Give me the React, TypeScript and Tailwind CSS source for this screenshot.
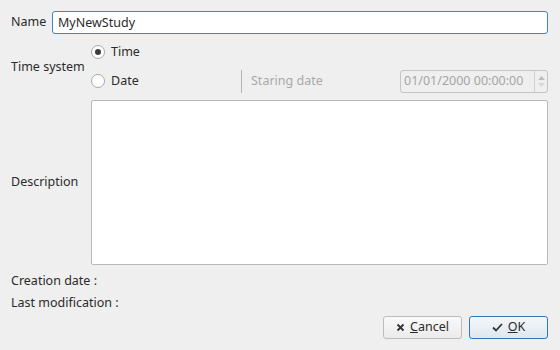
import React, { useState } from "react";

const font = { fontFamily: '"Noto Sans", "Open Sans", sans-serif' };

function Radio({ checked, label, onClick }: { checked: boolean; label: string; onClick: () => void }) {
  return (
    <button className="flex items-center gap-[6px] h-[22px]" onClick={onClick}>
      <span className="w-[14px] h-[14px] rounded-full border border-[#a8a8a8] bg-white flex items-center justify-center">
        {checked && <span className="w-[6px] h-[6px] rounded-full bg-[#3c3c3c]" />}
      </span>
      <span>{label}</span>
    </button>
  );
}

export default function App() {
  const [name, setName] = useState("MyNewStudy");
  const [system, setSystem] = useState<"time" | "date">("time");

  return (
    <div style={font} className="w-[560px] h-[350px] bg-[#efefef] text-[12.5px] text-[#2b2b2b] flex flex-col pl-[11px] pr-[12px] pt-[11px]">
      <div className="flex items-center h-[23px]">
        <span className="w-[41px]">Name</span>
        <input
          autoFocus
          value={name}
          onChange={(e) => setName(e.target.value)}
          className="flex-1 h-[23px] px-[5px] bg-white border border-[#3b86c7] rounded-[3px] outline-none caret-black"
        />
      </div>

      <div className="flex mt-[7px]">
        <div className="w-[80px] flex items-center pt-[2px]">Time system</div>
        <div className="flex-1 flex flex-col gap-[7px]">
          <Radio checked={system === "time"} label="Time" onClick={() => setSystem("time")} />
          <div className="flex items-center h-[22px]">
            <div className="w-[150px]">
              <Radio checked={system === "date"} label="Date" onClick={() => setSystem("date")} />
            </div>
            <div className="w-px h-[23px] bg-[#b4b4b4]" />
            <span className="ml-[9px] text-[#a9a9a9] flex-1">Staring date</span>
            <div className="w-[148px] h-[23px] flex border border-[#c4c4c4] rounded-[3px] bg-[#efefef]">
              <span className="flex-1 flex items-center pl-[3px] text-[#a5a5a5]">01/01/2000 00:00:00</span>
              <div className="w-[13px] border-l border-[#d0d0d0] flex flex-col items-center justify-center gap-[3px]">
                <svg width="7" height="4" viewBox="0 0 7 4"><path d="M0 4L3.5 0L7 4Z" fill="#bdbdbd" /></svg>
                <svg width="7" height="4" viewBox="0 0 7 4"><path d="M0 0L3.5 4L7 0Z" fill="#d6d6d6" /></svg>
              </div>
            </div>
          </div>
        </div>
      </div>

      <div className="flex mt-[8px]">
        <div className="w-[80px] flex items-center">Description</div>
        <textarea className="flex-1 h-[165px] bg-white border border-[#b9b9b9] rounded-[2px] outline-none resize-none" />
      </div>

      <div className="mt-[5px] h-[22px] flex items-center">Creation date :</div>
      <div className="h-[22px] flex items-center">Last modification :</div>

      <div className="flex justify-end gap-[7px] mt-[2px]">
        <button className="w-[79px] h-[23px] flex items-center justify-center gap-[5px] border border-[#bcbcbc] rounded-[3px] bg-gradient-to-b from-[#f9f9f9] to-[#ebebeb]">
          <svg width="9" height="9" viewBox="0 0 9 9"><path d="M1.5 1.5L7.5 7.5M7.5 1.5L1.5 7.5" stroke="#333" strokeWidth="1.8" /></svg>
          <span><span className="underline">C</span>ancel</span>
        </button>
        <button className="w-[79px] h-[23px] flex items-center justify-center gap-[5px] border border-[#2f78b5] rounded-[3px] bg-gradient-to-b from-[#f4f7fa] to-[#dfe7ef]">
          <svg width="11" height="9" viewBox="0 0 11 9"><path d="M1 4.5L4 7.5L10 1" stroke="#333" strokeWidth="1.8" fill="none" /></svg>
          <span><span className="underline">O</span>K</span>
        </button>
      </div>
    </div>
  );
}
